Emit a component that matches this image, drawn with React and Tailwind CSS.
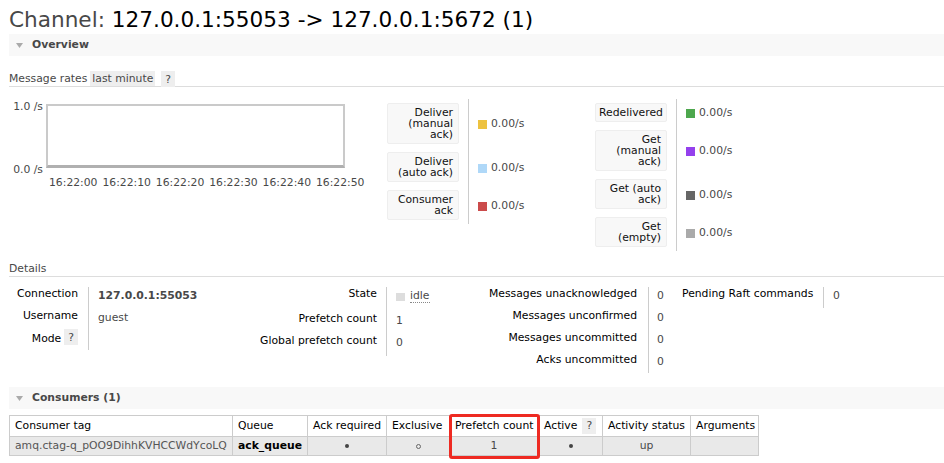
import React from 'react';

const Tri = () => (
  <svg width="7" height="5" viewBox="0 0 7 5" className="shrink-0">
    <polygon points="0,0 7,0 3.5,5" fill="#aaa" />
  </svg>
);

const SectionBar = ({ title }) => (
  <div className="h-[22px] bg-[#f8f8f8] flex items-center pl-[7px]">
    <Tri />
    <span className="ml-[9px] font-bold text-[#484848]">{title}</span>
  </div>
);

const Help = ({ className = '' }) => (
  <span className={`inline-flex items-center justify-center bg-[#eee] px-[4px] h-[16px] text-[#484848] ${className}`}>?</span>
);

const LegendRow = ({ label, swatch }) => (
  <div className="flex">
    <div className="w-[81px] py-[4px]">
      <div className="w-[72px] bg-[#f8f8f8] border border-[#eee] rounded-[2px] pl-[3px] pr-[5px] py-[3px] text-right leading-[11px] text-[#111]">
        {label}
      </div>
    </div>
    <div className="w-[127px] border-l border-[#ccc] flex items-center pl-[9px] pt-[2px]">
      <span className={`w-[9px] h-[9px] mr-[4px] ${swatch}`} />
      <span>0.00/s</span>
    </div>
  </div>
);

const legendLeft = [
  { label: 'Deliver (manual ack)', swatch: 'bg-[#edc240]' },
  { label: 'Deliver (auto ack)', swatch: 'bg-[#afd8f8]' },
  { label: 'Consumer ack', swatch: 'bg-[#cb4b4b]' },
];

const legendRight = [
  { label: 'Redelivered', swatch: 'bg-[#4da74d]' },
  { label: 'Get (manual ack)', swatch: 'bg-[#9440ed]' },
  { label: 'Get (auto ack)', swatch: 'bg-[#666]' },
  { label: 'Get (empty)', swatch: 'bg-[#aaa]' },
];

const times = ['16:22:00', '16:22:10', '16:22:20', '16:22:30', '16:22:40', '16:22:50'];

// one row of a facts table: label | value, separated by a vertical rule
const Fact = ({ label, h = 'h-[22px]', lw, lp = 'pr-[10px]', vw, vp = 'pl-[9px]', children }) => (
  <div className={`flex ${h}`}>
    <div className={`${lw} ${lp} text-right text-[#000] whitespace-nowrap leading-[13px]`}>{label}</div>
    <div className={`${vw} ${vp} border-l border-[#ccc] pt-[2px] leading-[13px] whitespace-nowrap`}>{children}</div>
  </div>
);

const Dot = () => <span className="inline-block w-[4px] h-[4px] rounded-full bg-[#444]" />;
const Ring = () => <span className="inline-block w-[5px] h-[5px] rounded-full border border-[#666]" />;

const Cell = ({ children, className = '' }) => (
  <div className={`border-r border-b border-[#ccc] flex items-center px-[5px] whitespace-nowrap ${className}`}>{children}</div>
);

export default function App() {
  return (
    <div className="w-[944px] h-[463px] overflow-hidden bg-white pl-[9px] font-['DejaVu_Sans',sans-serif] text-[10.8px] text-[#484848]">
      <h1 className="pt-[6px] text-[21.6px] leading-[28px] whitespace-nowrap">
        <span className="text-[#484848]">Channel: </span>
        <span className="text-[#000]">127.0.0.1:55053 -&gt; 127.0.0.1:5672 (1)</span>
      </h1>

      <SectionBar title="Overview" />

      <div className="mt-[15px] h-[16px] border-b border-[#ddd] flex items-stretch leading-[15px]">
        <span>Message rates</span>
        <span className="ml-[3px] bg-[#eee] px-[2px]">last minute</span>
        <Help className="ml-[6px] h-[15px]" />
      </div>

      <div className="mt-[11px] flex items-start">
        <div className="w-[378px] pt-[2px] flex">
          <div className="w-[37px] h-[76px] flex flex-col justify-between items-end pr-[3px] leading-[13px]">
            <span>1.0 /s</span>
            <span>0.0 /s</span>
          </div>
          <div>
            <div className="w-[299px] h-[64px] mt-[4px] border-2 border-[#cacaca] border-b-[3px] border-b-[#b0b0b0]" />
            <div className="flex ml-[3px] mt-[8px] leading-[13px] whitespace-nowrap">
              {times.map(t => (
                <span key={t} className="w-[53.4px]">{t}</span>
              ))}
            </div>
          </div>
        </div>

        <div className="flex flex-col pt-[1px]">
          {legendLeft.map(r => <LegendRow key={r.label} {...r} />)}
        </div>
        <div className="flex flex-col pt-[1px]">
          {legendRight.map(r => <LegendRow key={r.label} {...r} />)}
        </div>
      </div>

      <h3 className="mt-[10px] h-[16px] border-b border-[#ddd] leading-[15px]">Details</h3>

      <div className="mt-[10px] flex items-start">
        <div className="flex flex-col">
          <Fact label="Connection" lw="w-[79px]" vw="w-[150px]">
            <span className="font-bold text-[#484848]">127.0.0.1:55053</span>
          </Fact>
          <Fact label="Username" lw="w-[79px]" vw="w-[150px]">guest</Fact>
          <Fact
            label={<span className="inline-flex items-center">Mode<Help className="ml-[3px] -mt-[2px]" /></span>}
            h="h-[19px]" lw="w-[79px]" vw="w-[150px]"
          />
        </div>

        <div className="flex flex-col">
          <Fact label="State" h="h-[25px]" lw="w-[148px]" lp="pr-[9px]" vw="w-[94px]">
            <span className="inline-flex items-center pt-[1px]">
              <span className="w-[9px] h-[8px] bg-[#ddd]" />
              <span className="ml-[5px] border-b border-dotted border-[#888] leading-[12px]">idle</span>
            </span>
          </Fact>
          <Fact label="Prefetch count" lw="w-[148px]" lp="pr-[9px]" vw="w-[94px]">1</Fact>
          <Fact label="Global prefetch count" lw="w-[148px]" lp="pr-[9px]" vw="w-[94px]">0</Fact>
        </div>

        <div className="flex flex-col">
          <Fact label="Messages unacknowledged" lw="w-[168px]" lp="pr-[11px]" vw="w-[34px]" vp="pl-[8px]">0</Fact>
          <Fact label="Messages unconfirmed" lw="w-[168px]" lp="pr-[11px]" vw="w-[34px]" vp="pl-[8px]">0</Fact>
          <Fact label="Messages uncommitted" lw="w-[168px]" lp="pr-[11px]" vw="w-[34px]" vp="pl-[8px]">0</Fact>
          <Fact label="Acks uncommitted" h="h-[20px]" lw="w-[168px]" lp="pr-[11px]" vw="w-[34px]" vp="pl-[8px]">0</Fact>
        </div>

        <div className="flex flex-col">
          <Fact label="Pending Raft commands" h="h-[21px]" lw="w-[141px]" vw="w-[60px]">0</Fact>
        </div>
      </div>

      <div className="mt-[14px]">
        <SectionBar title="Consumers (1)" />
      </div>

      <div className="mt-[6px] relative w-[750px]">
        <div className="grid grid-cols-[223px_75px_79px_63px_89px_64px_88px_68px] border-t border-l border-[#ccc]">
          <Cell className="h-[21px] text-[#000]">Consumer tag</Cell>
          <Cell className="h-[21px] text-[#000]">Queue</Cell>
          <Cell className="h-[21px] text-[#000] px-[4px]">Ack required</Cell>
          <Cell className="h-[21px] text-[#000]">Exclusive</Cell>
          <Cell className="h-[21px] text-[#000] px-[3px]">Prefetch count</Cell>
          <Cell className="h-[21px] text-[#000]">
            Active<Help className="ml-[5px]" />
          </Cell>
          <Cell className="h-[21px] text-[#000]">Activity status</Cell>
          <Cell className="h-[21px] text-[#000]">Arguments</Cell>

          <Cell className="h-[19px] bg-[#e9e9e9] text-[#555]">amq.ctag-q_pOO9DihhKVHCCWdYcoLQ</Cell>
          <Cell className="h-[19px] bg-[#e9e9e9] font-bold text-[#000]">ack_queue</Cell>
          <Cell className="h-[19px] bg-[#e9e9e9] justify-center"><Dot /></Cell>
          <Cell className="h-[19px] bg-[#e9e9e9] justify-center"><Ring /></Cell>
          <Cell className="h-[19px] bg-[#e9e9e9] justify-center">1</Cell>
          <Cell className="h-[19px] bg-[#e9e9e9] justify-center"><Dot /></Cell>
          <Cell className="h-[19px] bg-[#e9e9e9] justify-center">up</Cell>
          <Cell className="h-[19px] bg-[#e9e9e9]" />
        </div>
        <div className="absolute left-[440px] -top-[1px] w-[91px] h-[45px] border-[3px] border-[#ee2a22] rounded-[3px]" />
      </div>
    </div>
  );
}
